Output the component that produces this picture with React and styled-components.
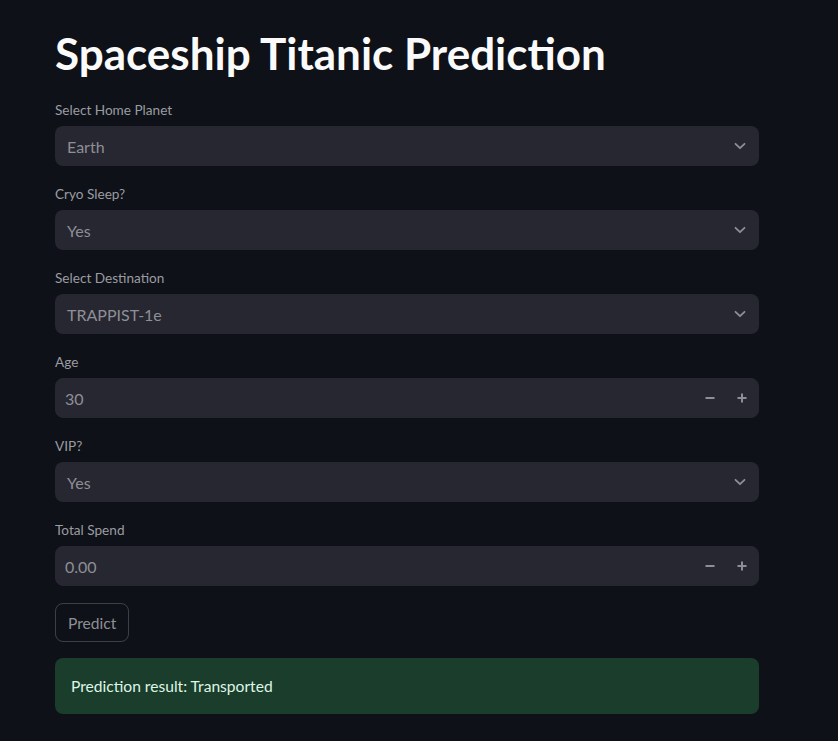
import React from "react";
import styled, { createGlobalStyle } from "styled-components";

const Global = createGlobalStyle`
  html, body { margin: 0; padding: 0; background: #0e1117; }
  body { font-family: "Lato", "Noto Sans", sans-serif; color: #fafafa; }
  * { box-sizing: border-box; }
`;

const Page = styled.div`
  min-height: 741px;
  background: #0e1117;
  padding: 25px 79px 0 55px;
`;

const Main = styled.div`
  width: 704px;
  display: flex;
  flex-direction: column;
  gap: 16px;
`;

const Title = styled.h1`
  margin: 0;
  font-size: 44px;
  font-weight: 700;
  line-height: 57px;
  color: #fafafa;
  letter-spacing: 0;
`;

const Field = styled.div`
  display: flex;
  flex-direction: column;
`;

const Label = styled.label`
  font-size: 13.6px;
  line-height: 24px;
  height: 24px;
  margin-bottom: 4px;
  color: #9b9ca2;
`;

const Box = styled.div`
  height: 40px;
  background: #262730;
  border-radius: 8px;
  display: flex;
  align-items: center;
  padding: 0 ${p => (p.$number ? "0" : "12px")} 0 ${p => (p.$number ? "9px" : "12px")};
  color: #8e8f96;
  font-size: 16px;
  border: ${p => (p.$number ? "1px solid #262730" : "none")};
`;

const Value = styled.span`
  flex: 1;
`;

const Step = styled.span`
  width: 32px;
  height: 32px;
  display: flex;
  align-items: center;
  justify-content: center;
  color: #8e8f96;
`;

const Button = styled.button`
  align-self: flex-start;
  height: 39px;
  padding: 0 12px;
  background: transparent;
  border: 1px solid rgba(250, 250, 250, 0.2);
  border-radius: 8px;
  color: #8e8f96;
  font-family: inherit;
  font-size: 15.6px;
  margin-top: 1px;
`;

const Alert = styled.div`
  height: 56px;
  background: #1a3e2b;
  border-radius: 8px;
  display: flex;
  align-items: center;
  padding: 0 16px;
  color: #dff5e6;
  font-size: 15.6px;
`;

const Chevron = () => (
  <svg width="14" height="14" viewBox="0 0 14 14" fill="none">
    <path d="M2.5 4.8 L7 9.2 L11.5 4.8" stroke="#8e8f96" strokeWidth="1.8" strokeLinecap="round" strokeLinejoin="round" />
  </svg>
);

const Minus = () => (
  <svg width="12" height="12" viewBox="0 0 12 12">
    <path d="M1.5 6 H10.5" stroke="#8e8f96" strokeWidth="2" />
  </svg>
);

const Plus = () => (
  <svg width="12" height="12" viewBox="0 0 12 12">
    <path d="M1.5 6 H10.5 M6 1.5 V10.5" stroke="#8e8f96" strokeWidth="2" />
  </svg>
);

const SelectField = ({ label, value }) => (
  <Field>
    <Label>{label}</Label>
    <Box>
      <Value>{value}</Value>
      <Chevron />
    </Box>
  </Field>
);

const NumberField = ({ label, value }) => (
  <Field>
    <Label>{label}</Label>
    <Box $number>
      <Value>{value}</Value>
      <Step><Minus /></Step>
      <Step><Plus /></Step>
    </Box>
  </Field>
);

export default function App() {
  return (
    <>
      <Global />
      <Page>
        <Main>
          <Title>Spaceship Titanic Prediction</Title>
          <SelectField label="Select Home Planet" value="Earth" />
          <SelectField label="Cryo Sleep?" value="Yes" />
          <SelectField label="Select Destination" value="TRAPPIST-1e" />
          <NumberField label="Age" value="30" />
          <SelectField label="VIP?" value="Yes" />
          <NumberField label="Total Spend" value="0.00" />
          <Button>Predict</Button>
          <Alert>Prediction result: Transported</Alert>
        </Main>
      </Page>
    </>
  );
}
